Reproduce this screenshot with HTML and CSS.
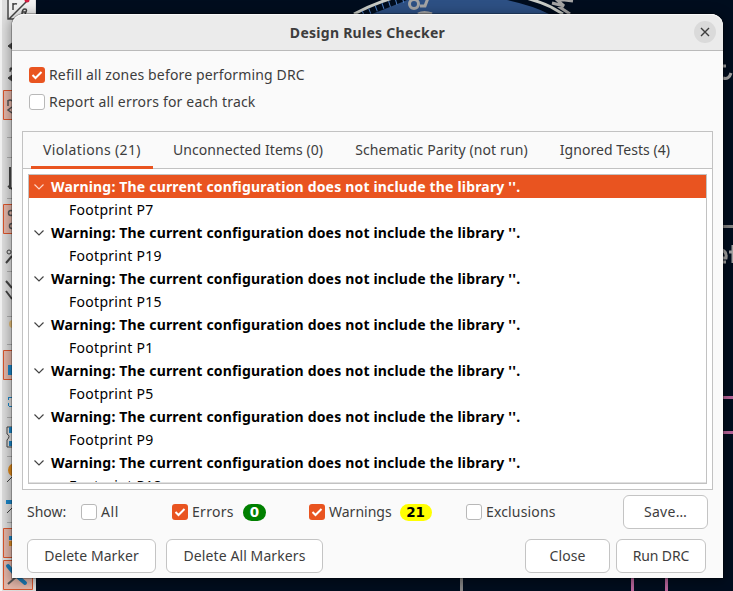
FILE: index.html
```html
<!DOCTYPE html>
<html lang="en">
<head>
<meta charset="utf-8">
<title>Design Rules Checker</title>
<link rel="stylesheet" href="styles.css">
</head>
<body>
<svg class="canvas" width="733" height="591" viewBox="0 0 733 591" aria-hidden="true">
  <rect width="733" height="591" fill="#000d1e"/>
  <path d="M372 14Q398 4 414-3H492Q530 4 549 14Z" fill="#2d5084"/>
  <path d="M354 14Q375 3 396-3" fill="none" stroke="#c9ccc6" stroke-width="3"/>
  <path d="M363 14Q383 5 407-1" fill="none" stroke="#4d7fc4" stroke-width="6" stroke-dasharray="1 6"/>
  <path d="M526-2Q538 1 551 7L563 14" fill="none" stroke="#c9ccc6" stroke-width="3"/>
  <g fill="none" stroke="#a5a5a5" stroke-width="3">
    <circle cx="414" cy="4" r="4.500"/><path d="M420 6h5l3-8M418 14q6-3 14 0M552 3l12 3-8-7 17 2M558 6l12 8"/>
    <path d="M723 66h3M723 78q6 2 8-5"/>
  </g>
  <g fill="none" stroke="#858585" stroke-width="3"><path d="M723 226.500h10M461.500 578v13"/></g>
  <g fill="none" stroke="#a5a5a5" stroke-width="3"><path d="M722 250q5 2 4 8h-4M723 262h3M733 245v18M729 252h4"/></g>
  <path d="M723 397.500h10M723 432.500h10M632.500 578v13M666.500 578v13" stroke="#b9659b" stroke-width="3"/>
  <rect width="36" height="591" fill="#dedede"/><rect width="2" height="591" fill="#f4f4f4"/>
  <rect x="7" y="-6" width="28" height="26" fill="#f1f1f1"/>
  <g fill="none" stroke="#444">
    <path d="M8 0v19h10M9 19L27 1M13 10V3M13 5q1-2 4-1" stroke-width="1.500"/>
    <path d="M22 14q0-5 3-5t0 5M22 12h4" stroke-width="1.500"/>
    <path d="M8 46l4-3v6zM8 78l4-3v6zM10 72v-4h3" fill="#444"/>
    <path d="M10 167v22M8 186l4 3" stroke-width="2"/>
    <path d="M6 263l6-7M6 281l6 7M6 291l6 8" stroke-width="2"/>
    <circle cx="9" cy="252" r="2"/>
    <path d="M12 427H7v7q4 2 0 6v7h5M7 482l5-5M7 513l5-5"/>
  </g>
  <circle cx="27" cy="0" r="2.500" fill="#d51e40"/>
  <path d="M7 137.500h5M7 157.500h5M7 198.500h5M7 271.500h5M7 316.500h5M7 344.500h5M7 417.500h5M7 456.500h5M7 522.500h5" stroke="#b0b0b0"/>
  <g fill="#e3b6a9" stroke="#d9542b"><path d="M3.500 90.500h29v29h-29zM3.500 204.500h29v29h-29zM3.500 350.500h29v29h-29zM3.500 528.500h29v29h-29zM3.500 560.500h29v29h-29z"/></g>
  <g fill="none" stroke="#555" stroke-width="1.500"><path d="M8 106v-6M8 101q2-2 4 0M12 107l-4 3 4 3"/><circle cx="11" cy="213" r="2.500"/><circle cx="12" cy="226" r="2.500"/></g>
  <path d="M8 365h5v10H8zM6 500h6v4H6zM9 427h3v6H9zM9 441h3v5H9z" fill="#1b86c8"/>
  <path d="M8.500 397v3M8.500 403v3M9 397.500h3M9 406.500h3" stroke="#1b86c8"/>
  <circle cx="15" cy="470" r="7" fill="#e08a1a"/><circle cx="13" cy="324" r="4" fill="#e6bf79"/>
  <path d="M9 536h3v4H9z" fill="#1b86c8"/><path d="M9 541h3v5H9z" fill="#d98a24"/>
  <path d="M8 566l5 6M18 577l7 6" stroke="#1b7cb8" stroke-width="4" stroke-linecap="round"/>
  <path d="M8 584l8-7" stroke="#555" stroke-width="2"/>
</svg>

<main class="dialog">
  <header class="titlebar">
    <h1>Design Rules Checker</h1>
    <button class="dismiss" aria-label="Close dialog"><svg width="10" height="10" viewBox="0 0 10 10"><path d="M1 1l8 8M9 1l-8 8"/></svg></button>
  </header>
  <section class="options">
    <label class="check"><span class="box on"><svg viewBox="0 0 16 16"><path d="M3.500 8l3 3L12.500 5"/></svg></span><span class="t-refill">Refill all zones before performing DRC</span></label>
    <label class="check"><span class="box"></span><span class="t-report">Report all errors for each track</span></label>
  </section>
  <section class="notebook">
    <nav class="tabs">
      <span class="tab active">Violations (21)</span>
      <span class="tab t-unc">Unconnected Items (0)</span>
      <span class="tab t-sch">Schematic Parity (not run)</span>
      <span class="tab t-ign">Ignored Tests (4)</span>
    </nav>
    <div class="page">
      <div class="tree">
        <div class="row selected"><svg class="chev" viewBox="0 0 10 6"><path d="M.5.5L5 5 9.500.5"/></svg><b>Warning: The current configuration does not include the library ''.</b></div>
        <div class="row child">Footprint P7</div>
        <div class="row"><svg class="chev" viewBox="0 0 10 6"><path d="M.5.5L5 5 9.500.5"/></svg><b>Warning: The current configuration does not include the library ''.</b></div>
        <div class="row child">Footprint P19</div>
        <div class="row"><svg class="chev" viewBox="0 0 10 6"><path d="M.5.5L5 5 9.500.5"/></svg><b>Warning: The current configuration does not include the library ''.</b></div>
        <div class="row child">Footprint P15</div>
        <div class="row"><svg class="chev" viewBox="0 0 10 6"><path d="M.5.5L5 5 9.500.5"/></svg><b>Warning: The current configuration does not include the library ''.</b></div>
        <div class="row child">Footprint P1</div>
        <div class="row"><svg class="chev" viewBox="0 0 10 6"><path d="M.5.5L5 5 9.500.5"/></svg><b>Warning: The current configuration does not include the library ''.</b></div>
        <div class="row child">Footprint P5</div>
        <div class="row"><svg class="chev" viewBox="0 0 10 6"><path d="M.5.5L5 5 9.500.5"/></svg><b>Warning: The current configuration does not include the library ''.</b></div>
        <div class="row child">Footprint P9</div>
        <div class="row"><svg class="chev" viewBox="0 0 10 6"><path d="M.5.5L5 5 9.500.5"/></svg><b>Warning: The current configuration does not include the library ''.</b></div>
        <div class="row child">Footprint P18</div>
      </div>
    </div>
  </section>
  <section class="filters">
    <span class="show">Show:</span>
    <label class="check all"><span class="box"></span><span>All</span></label>
    <label class="check errors"><span class="box on"><svg viewBox="0 0 16 16"><path d="M3.500 8l3 3L12.500 5"/></svg></span><span>Errors</span><em class="badge green">0</em></label>
    <label class="check warnings"><span class="box on"><svg viewBox="0 0 16 16"><path d="M3.500 8l3 3L12.500 5"/></svg></span><span>Warnings</span><em class="badge yellow">21</em></label>
    <label class="check excl"><span class="box"></span><span>Exclusions</span></label>
    <button class="btn save">Save…</button>
  </section>
  <footer class="actions">
    <button class="btn marker">Delete Marker</button>
    <button class="btn markers">Delete All Markers</button>
    <button class="btn close">Close</button>
    <button class="btn run">Run DRC</button>
  </footer>
</main>
</body>
</html>
```
FILE: styles.css
```css
* { box-sizing: border-box; }
body {
  margin: 0; width: 733px; height: 591px; overflow: hidden;
  padding: 14px 10px 13px 12px; position: relative;
  font: 14px/20px "Noto Sans", "Open Sans", sans-serif; color: #3d3d3d;
}
.canvas { position: absolute; left: 0; top: 0; }
.dialog {
  position: relative; width: 711px; height: 564px;
  display: flex; flex-direction: column;
  background: #fafafa; border-radius: 12px 12px 0 0;
  box-shadow: 0 0 0 1px rgba(0,0,0,.25), 0 2px 12px 2px rgba(0,0,0,.35);
}
.titlebar {
  height: 37px; flex: none; display: grid; grid-template-columns: 1fr auto 1fr; align-items: center;
  background: #ebebeb; border-bottom: 1px solid #bababa; border-radius: 12px 12px 0 0;
  box-shadow: inset 0 1px #f9f9f9; padding: 0 7px;
}
h1 { grid-column: 2; margin: 0; font-size: 14px; font-weight: 700; line-height: 20px; letter-spacing: .27px; position: relative; top: 1px; }
.dismiss {
  justify-self: end; width: 22px; height: 22px; border: 0; border-radius: 50%; padding: 0;
  background: #dadada; display: grid; place-items: center;
}
.dismiss svg { stroke: #3d3d3d; stroke-width: 1.4; fill: none; }
.options { height: 80px; flex: none; padding: 14px 17px 0; display: flex; flex-direction: column; gap: 7px; }
.check { display: flex; align-items: center; gap: 4px; height: 20px; white-space: nowrap; }
.t-refill { letter-spacing: .15px; }
.t-report { letter-spacing: .18px; }
.box { width: 16px; height: 16px; flex: none; border: 1px solid #b8b8b8; border-radius: 3px; background: #fff; }
.box.on { background: #e95420; border: 0; }
.box svg { display: block; width: 16px; height: 16px; fill: none; stroke: #fff; stroke-width: 2; }
.notebook { margin: 0 10px; height: 359px; flex: none; border: 1px solid #c2c2c2; display: flex; flex-direction: column; }
.tabs { height: 37px; flex: none; display: flex; padding-left: 8px; gap: 8px; border-bottom: 1px solid #c2c2c2; }
.tab { height: 37px; padding: 8px 12px; white-space: nowrap; }
.active { box-shadow: inset 0 -3px #e95420; letter-spacing: .36px; }
.t-unc { letter-spacing: .07px; }
.t-sch { letter-spacing: .11px; }
.t-ign { letter-spacing: .06px; }
.page { flex: 1; background: #fff; padding: 5px; }
.tree { height: 310px; border: 1px solid #c2c2c2; overflow: hidden; color: #000; position: relative; }
.tree::after { content: ""; position: absolute; left: 0; right: 0; bottom: 0; height: 1px; background: #e0e0e0; }
.row { display: flex; align-items: center; height: 23px; padding-left: 5px; white-space: nowrap; }
.row b { font-weight: 700; letter-spacing: .18px; }
.child { padding-left: 40px; letter-spacing: .28px; }
.selected { background: #e95420; color: #fff; }
.chev { width: 10px; height: 6px; margin-right: 7px; fill: none; stroke: #444; stroke-width: 1.2; overflow: visible; position: relative; top: .5px; }
.selected .chev { stroke: #ffd6c8; }
.filters { height: 49px; flex: none; padding: 5px 15px 10px; display: grid; grid-template-columns: 54px 91px 137px 157px 157px 85px; align-items: center; }
.all { letter-spacing: .6px; }
.errors { letter-spacing: .3px; }
.excl { letter-spacing: .15px; }
.badge { height: 17px; border-radius: 9px; font: 700 13.500px/17px "DejaVu Sans", sans-serif; text-align: center; letter-spacing: 0; }
.green { width: 23px; background: #008000; color: #fff; margin-left: 5px; }
.yellow { width: 32px; background: #ff0; color: #000; margin-left: 4px; }
.btn { height: 34px; border: 1px solid #c4c4c4; border-radius: 6px; background: #fff; color: #3d3d3d; font: inherit; padding: 0; white-space: nowrap; }
.save { letter-spacing: .3px; }
.actions { display: flex; height: 34px; padding: 0 17px 0 15px; }
.marker { width: 129px; letter-spacing: .06px; }
.markers { width: 157px; margin-left: 10px; letter-spacing: .1px; }
.close { width: 85px; margin-left: auto; letter-spacing: .1px; }
.run { width: 90px; margin-left: 6px; letter-spacing: -.15px; }
```
